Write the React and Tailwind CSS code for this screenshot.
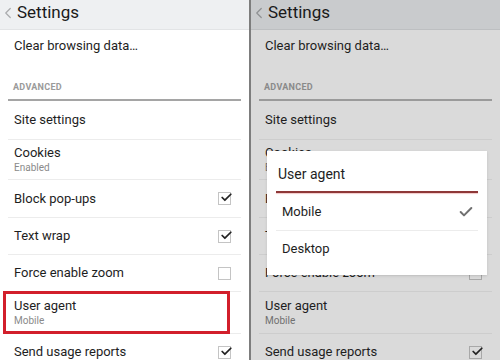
import { ChevronLeft, Check } from "lucide-react";

const font = { fontFamily: "Roboto, 'Liberation Sans', sans-serif" };

function Box({ checked, dim }) {
  return (
    <div
      className={`relative w-[13px] h-[13px] border ${dim ? "border-[#a8a8a8]" : "border-[#c4c4c4]"}`}
    >
      {checked && (
        <Check
          size={13}
          strokeWidth={3.2}
          className="absolute left-[1px] -top-[2px] text-[#222]"
        />
      )}
    </div>
  );
}

function Row({ title, sub, box, checked, dim, h, last }) {
  return (
    <div
      className={`flex items-center justify-between pl-[6px] pr-[10px] ${h} ${
        last ? "" : dim ? "border-b border-[#cdcdcd]" : "border-b border-[#ececec]"
      }`}
    >
      <div className="flex flex-col">
        <span className="text-[13px] leading-[16px] text-[#1e1e1e]">{title}</span>
        {sub && (
          <span className={`text-[10px] leading-[13px] ${dim ? "text-[#707070]" : "text-[#8a8a8a]"}`}>
            {sub}
          </span>
        )}
      </div>
      {box && <Box checked={checked} dim={dim} />}
    </div>
  );
}

function Panel({ dim }) {
  return (
    <div className={`relative w-[249px] h-[360px] overflow-hidden ${dim ? "bg-[#dadada]" : "bg-white"}`}>
      <div className={`h-[30px] flex items-center ${dim ? "bg-[#c9cbcd] border-b border-[#bdbfc1]" : "bg-[#eef0f2] border-b border-[#e2e4e6]"}`}>
        <ChevronLeft size={18} strokeWidth={1.6} className={`-ml-[1px] -mt-[3px] ${dim ? "text-[#8e9092]" : "text-[#a9abad]"}`} />
        <span className="-mt-[3px] text-[17px] text-[#1a1a1a]">Settings</span>
      </div>
      <div className="mx-[8px]">
        <div className="h-[32px] flex items-center pl-[6px] text-[13px] text-[#1e1e1e]">
          Clear browsing data…
        </div>
        <div className={`h-[37px] flex items-end pb-[5px] pl-[5px] text-[9px] font-bold tracking-[0.3px] ${dim ? "text-[#8a8a8a]" : "text-[#9a9a9a]"}`}>
          ADVANCED
        </div>
        <div className={`h-[2px] ${dim ? "bg-[#9a9a9a]" : "bg-[#a5a5a5]"}`} />
        <Row dim={dim} title="Site settings" h="h-[39px]" />
        <Row dim={dim} title="Cookies" sub="Enabled" h="h-[40px]" />
        <Row dim={dim} title="Block pop-ups" box checked h="h-[38px]" />
        <Row dim={dim} title="Text wrap" box checked h="h-[37px]" />
        <Row dim={dim} title="Force enable zoom" box h="h-[37px]" />
        <Row dim={dim} title="User agent" sub="Mobile" h="h-[42px]" />
        <Row dim={dim} title="Send usage reports" box checked h="h-[36px]" last />
      </div>
      {!dim && (
        <div className="absolute left-[3px] top-[291px] w-[227px] h-[43px] border-[3px] border-[#d21f2b]" />
      )}
      {dim && (
        <div className="absolute left-[16px] top-[151px] w-[220px] h-[124px] bg-white shadow-sm">
          <div className="h-[40px] flex items-center pl-[11px] pt-[6px] text-[14px] text-[#1e1e1e]">
            User agent
          </div>
          <div className="mx-[9px] h-[2px] bg-[#8e3838] shadow-[0_1px_1px_#f3c9c9]" />
          <div className="mx-[9px] h-[38px] flex items-center justify-between pl-[6px] pr-[4px] border-b border-[#ececec]">
            <span className="text-[13px] text-[#1e1e1e]">Mobile</span>
            <Check size={16} strokeWidth={3} className="text-[#707070]" />
          </div>
          <div className="mx-[9px] h-[36px] flex items-center pl-[6px]">
            <span className="text-[13px] text-[#1e1e1e]">Desktop</span>
          </div>
        </div>
      )}
    </div>
  );
}

export default function App() {
  return (
    <div className="w-[500px] h-[360px] flex overflow-hidden bg-white" style={font}>
      <Panel />
      <div className="w-[2px] bg-[#7d7d7d]" />
      <Panel dim />
    </div>
  );
}
